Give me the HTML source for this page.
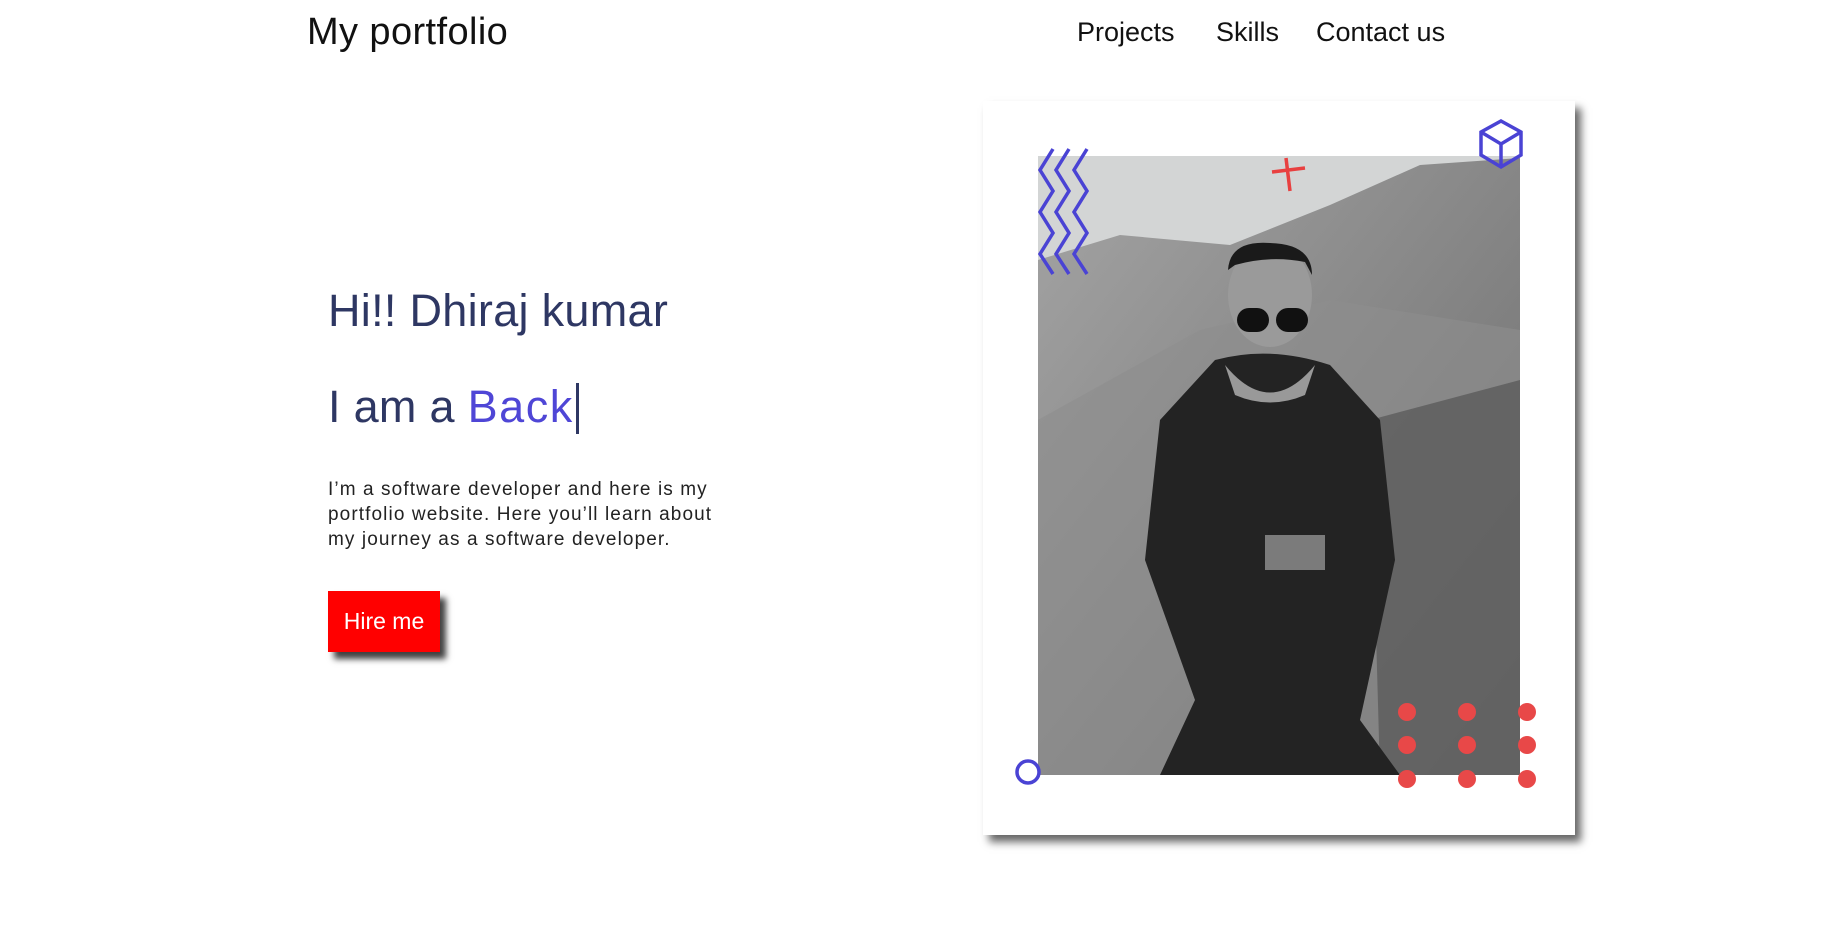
<!DOCTYPE html>
<html><head><meta charset="utf-8"><style>
*{margin:0;padding:0;box-sizing:border-box}
body{width:1829px;height:929px;background:#fff;font-family:"Liberation Sans",sans-serif;position:relative;overflow:hidden}
.logo{position:absolute;left:307px;top:11px;font-size:38px;color:#111;letter-spacing:.4px}
.nav{position:absolute;top:17px;font-size:27px;color:#111}
.h1{position:absolute;left:328px;top:285px;font-size:45px;color:#2e3763;white-space:nowrap;letter-spacing:.3px}
.h2{position:absolute;left:328px;top:381px;font-size:45px;color:#2e3763;white-space:nowrap;letter-spacing:.3px}
.h2 b{color:#4f46d6;font-weight:normal;letter-spacing:1.5px}
.cur{position:absolute;left:576px;top:383px;width:3px;height:51px;background:#2e3763}
.p{position:absolute;left:328px;top:477px;font-size:19px;line-height:25px;color:#222;white-space:nowrap;letter-spacing:1.1px}
.btn{position:absolute;left:328px;top:591px;width:112px;height:61px;background:#f00;color:#fff;font-size:23px;display:flex;align-items:center;justify-content:center;box-shadow:6px 7px 6px rgba(0,0,0,.75)}
.card{position:absolute;left:983px;top:101px;width:592px;height:734px;background:#fff;box-shadow:6px 7px 8px rgba(0,0,0,.6)}
</style></head><body>
<div class="logo">My portfolio</div>
<div class="nav" style="left:1077px">Projects</div>
<div class="nav" style="left:1216px">Skills</div>
<div class="nav" style="left:1316px">Contact us</div>
<div class="h1">Hi!! Dhiraj kumar</div>
<div class="h2">I am a <b>Back</b></div>
<div class="cur"></div>
<div class="p">I’m a software developer and here is my<br>portfolio website. Here you’ll learn about<br>my journey as a software developer.</div>
<div class="btn">Hire me</div>
<div class="card"></div>
<svg style="position:absolute;left:0;top:0" width="1829" height="929">
<defs><linearGradient id="m" x1="0" y1="0" x2="1" y2="1"><stop offset="0" stop-color="#a4a4a4"/><stop offset="1" stop-color="#6a6a6a"/></linearGradient></defs>
<rect x="1038" y="156" width="482" height="619" fill="#d3d5d5"/>
<path d="M1038 260 L1120 235 L1230 245 L1330 205 L1420 165 L1520 158 L1520 775 L1038 775Z" fill="url(#m)"/>
<path d="M1038 420 L1200 330 L1330 300 L1520 330 L1520 775 L1038 775Z" fill="#8e8e8e" opacity=".6"/>
<path d="M1370 420 L1520 380 L1520 775 L1380 775Z" fill="#555" opacity=".7"/>
<ellipse cx="1270" cy="295" rx="42" ry="52" fill="#9a9a9a"/>
<path d="M1228 270 Q1230 240 1270 243 Q1312 244 1312 275 L1305 262 Q1270 255 1235 265Z" fill="#1a1a1a"/>
<rect x="1237" y="308" width="32" height="24" rx="12" fill="#111"/><rect x="1276" y="308" width="32" height="24" rx="12" fill="#111"/>
<path d="M1215 360 Q1270 345 1330 365 L1380 420 L1395 560 L1360 720 L1400 775 L1160 775 L1195 700 L1145 560 L1160 420Z" fill="#232323"/>
<path d="M1225 365 Q1270 420 1315 365 L1305 395 Q1270 410 1235 395Z" fill="#999"/>
<rect x="1265" y="535" width="60" height="35" fill="#b5b5b5" opacity=".6"/>
<g fill="none" stroke="#4a43d4" stroke-width="3.5">
<path d="M1053 149 L1040 170 L1053 191 L1040 212 L1053 233 L1040 254 L1053 274"/>
<path d="M1069 149 L1056 170 L1069 191 L1056 212 L1069 233 L1056 254 L1069 274"/>
<path d="M1087 149 L1074 170 L1087 191 L1074 212 L1087 233 L1074 254 L1087 274"/>
<path d="M1501 121 L1521 132 L1521 155 L1501 167 L1481 155 L1481 132Z M1481 132 L1501 144 L1521 132 M1501 144 L1501 167"/>
<circle cx="1028" cy="772" r="11"/>
</g>
<g stroke="#e84040" stroke-width="3.5"><path d="M1272 172 L1305 168 M1286 158 L1290 191"/></g>
<g fill="#e84848">
<circle cx="1407" cy="712" r="9"/><circle cx="1467" cy="712" r="9"/><circle cx="1527" cy="712" r="9"/>
<circle cx="1407" cy="745" r="9"/><circle cx="1467" cy="745" r="9"/><circle cx="1527" cy="745" r="9"/>
<circle cx="1407" cy="779" r="9"/><circle cx="1467" cy="779" r="9"/><circle cx="1527" cy="779" r="9"/>
</g>
</svg>
</body></html>
